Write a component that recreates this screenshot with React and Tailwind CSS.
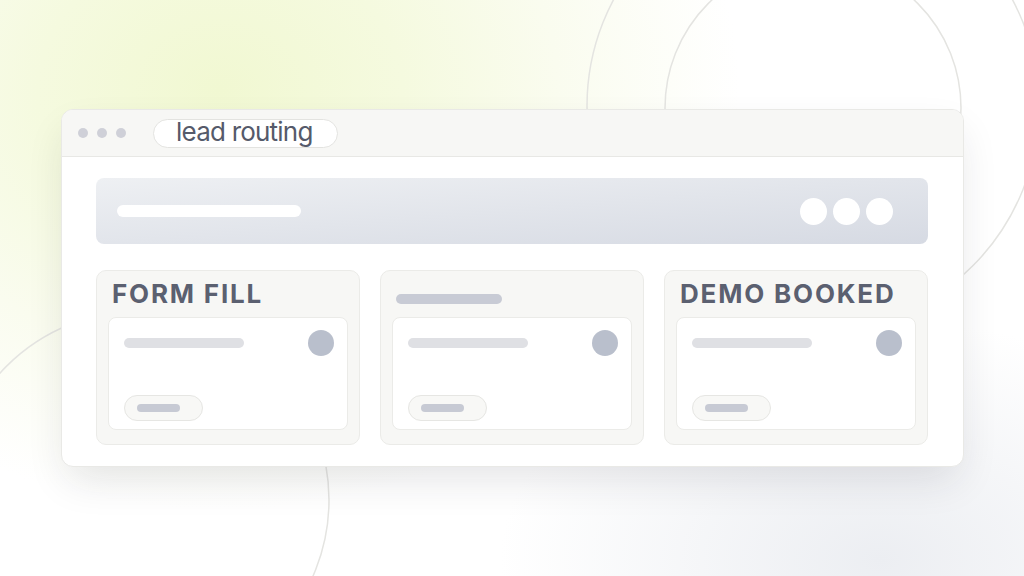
const columns = [
  { title: 'FORM FILL' },
  { title: null },
  { title: 'DEMO BOOKED' },
];

const LeadCard = () => (
  <div className="flex flex-col justify-between h-[113px] rounded-[8px] border border-[#ebebe8] bg-white pt-[12px] pl-[15px] pr-[13px] pb-[8px]">
    <div className="flex items-start justify-between">
      <div className="mt-[8px] h-[10px] w-[120px] rounded-full bg-[#dfe0e4]" />
      <div className="h-[26px] w-[26px] rounded-full bg-[#b9bfcc]" />
    </div>
    <div className="flex items-center h-[26px] w-[79px] rounded-full border border-[#e6e6e3] bg-[#f8f8f6] pl-[12px]">
      <div className="h-[8px] w-[43px] rounded-full bg-[#c7cad4]" />
    </div>
  </div>
);

const Column = ({ title }) => (
  <div className="flex flex-col h-[175px] rounded-[10px] border border-[#ebebe8] bg-[#f7f7f5] px-[11px]">
    <div className="flex items-center h-[46px] pl-[4px]">
      {title ? (
        <span className="text-[26px] font-bold tracking-[0.07em] text-[#5b6070] leading-none">
          {title}
        </span>
      ) : (
        <div className="mt-[10px] h-[10px] w-[106px] rounded-full bg-[#c8cbd5]" />
      )}
    </div>
    <LeadCard />
  </div>
);

const App = () => {
  return (
    <div
      className="relative w-[1024px] h-[576px] overflow-hidden bg-white"
      style={{ fontFamily: 'Inter, "Noto Sans", sans-serif' }}
    >
      {/* background glow + rings */}
      <div className="absolute inset-0 bg-[radial-gradient(ellipse_520px_420px_at_220px_90px,#f1f8d2_0%,#f5fadf_35%,#fafcef_65%,rgba(255,255,255,0)_100%)]" />
      <div className="absolute inset-0 bg-[radial-gradient(ellipse_380px_240px_at_880px_560px,#eceef2_0%,rgba(255,255,255,0)_100%)]" />
      <svg className="absolute inset-0" width="1024" height="576" viewBox="0 0 1024 576" fill="none">
        <circle cx="813" cy="106" r="226" stroke="#e4e4e1" strokeWidth="1.5" />
        <circle cx="813" cy="108" r="148" stroke="#e4e4e1" strokeWidth="1.5" />
        <circle cx="140" cy="500" r="189" stroke="#e4e4e1" strokeWidth="1.5" />
      </svg>

      <div className="relative pt-[109px] pl-[61px] pr-[60px]">
        <div className="flex flex-col h-[358px] rounded-[12px] border border-[#e9e9e6] bg-white overflow-hidden shadow-[0_18px_40px_-6px_rgba(30,35,50,0.12)]">
          <div className="flex items-center h-[47px] shrink-0 bg-[#f7f7f5] border-b border-[#e8e8e5] pl-[16px]">
            <div className="flex gap-[9px]">
              <span className="h-[10px] w-[10px] rounded-full bg-[#cfd0d8]" />
              <span className="h-[10px] w-[10px] rounded-full bg-[#cfd0d8]" />
              <span className="h-[10px] w-[10px] rounded-full bg-[#cfd0d8]" />
            </div>
            <div className="ml-[27px] flex items-center h-[29px] w-[185px] rounded-full border border-[#e3e3e0] bg-white pl-[22px]">
              <span className="text-[26px] leading-none tracking-[-0.03em] text-[#555a6a] pb-[2px]">
                lead routing
              </span>
            </div>
          </div>

          <div className="flex flex-col flex-1 pl-[34px] pr-[35px] pt-[21px]">
            <div className="flex items-center justify-between h-[66px] rounded-[8px] bg-gradient-to-br from-[#eef0f3] to-[#d6dae3] pl-[21px] pr-[35px]">
              <div className="h-[12px] w-[184px] rounded-full bg-white" />
              <div className="flex gap-[6px]">
                <span className="h-[27px] w-[27px] rounded-full bg-white" />
                <span className="h-[27px] w-[27px] rounded-full bg-white" />
                <span className="h-[27px] w-[27px] rounded-full bg-white" />
              </div>
            </div>

            <div className="grid grid-cols-3 gap-[20px] mt-[26px]">
              {columns.map((c, i) => (
                <Column key={i} title={c.title} />
              ))}
            </div>
          </div>
        </div>
      </div>
    </div>
  );
};

export default App;
